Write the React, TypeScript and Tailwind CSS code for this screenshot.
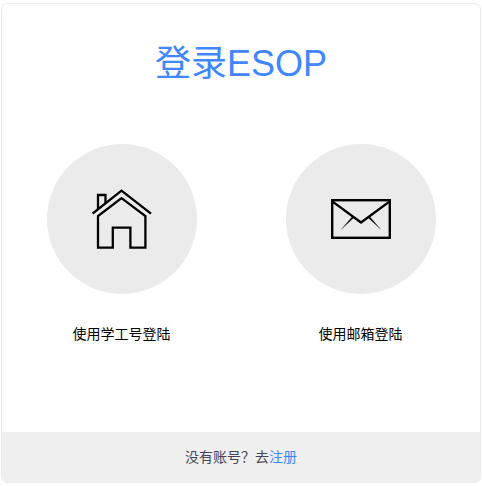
import type { ReactNode } from "react";

function HouseIcon() {
  return (
    <svg width="60" height="60" viewBox="0 0 60 60" fill="none" stroke="#000" strokeWidth="2.3" aria-hidden="true">
      <path d="M0.6 24.6 29.5 1.6 59 24.6" />
      <path d="M6 20V6H13.5V14" />
      <path d="M6 58.6V27L29.5 9.2 53.4 27V58.6H38.4V38.6H20.8V58.6Z" />
    </svg>
  );
}

function MailIcon() {
  return (
    <svg width="60" height="40" viewBox="0 0 60 40" fill="none" stroke="#000" aria-hidden="true">
      <rect x="1.2" y="1.2" width="57.6" height="37.6" strokeWidth="2.4" />
      <path d="M1.6 2.6 30 23.4 58.4 2.6" strokeWidth="2.4" />
      <path d="M21.4 17.4 23 18.6 10.4 30.2Z M38.6 17.4 37 18.6 49.6 30.2Z" fill="#000" strokeWidth="0.2" />
    </svg>
  );
}

function LoginOption({ label, children }: { label: string; children: ReactNode }) {
  return (
    <button type="button" className="flex cursor-pointer flex-col items-center gap-[30px] text-sm text-black">
      <span className="flex size-[150px] items-center justify-center rounded-full bg-[#ebebeb]">{children}</span>
      <span>{label}</span>
    </button>
  );
}

export default function App() {
  return (
    <main className="bg-white px-px py-[3px] font-['Liberation_Sans','Noto_Sans_CJK_SC',sans-serif]">
      <section className="overflow-hidden rounded-md border border-[#ebebeb]">
        <h1 className="pt-10 text-center text-4xl text-[#4087ff]">登录ESOP</h1>
        <div className="grid grid-cols-2 justify-items-center pt-15 pb-22">
          <LoginOption label="使用学工号登陆">
            <HouseIcon />
          </LoginOption>
          <LoginOption label="使用邮箱登陆">
            <MailIcon />
          </LoginOption>
        </div>
        <footer className="bg-[#efefef] py-[15px] text-center text-sm text-[#444455]">
          没有账号？去
          <a href="#register" className="text-[#4087ff]">
            注册
          </a>
        </footer>
      </section>
    </main>
  );
}
